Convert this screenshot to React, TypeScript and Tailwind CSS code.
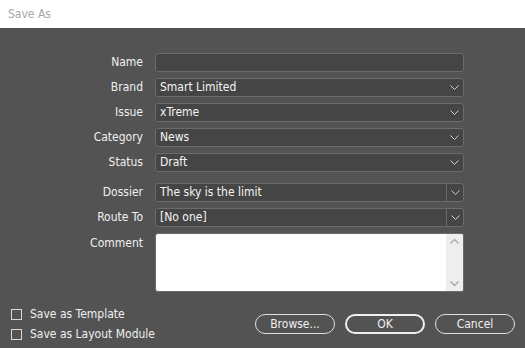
import React from 'react';

const font = { fontFamily: '"DejaVu Sans Condensed", "DejaVu Sans", "Liberation Sans", sans-serif' };

const Chevron = () => (
  <svg width="9" height="5" viewBox="0 0 9 5" className="shrink-0">
    <path d="M0.5 0.5 L4.5 4.5 L8.5 0.5" fill="none" stroke="#d0d0d0" strokeWidth="1" />
  </svg>
);

const Label: React.FC<{ text: string; top?: boolean }> = ({ text, top }) => (
  <div className={`w-[132px] shrink-0 text-right text-[12px] text-[#f0f0f0] ${top ? 'pt-[3px] leading-[14px]' : 'leading-[19px]'}`}>{text}</div>
);

const Select: React.FC<{ label: string; value: string; split?: boolean }> = ({ label, value, split }) => (
  <div className="flex items-center gap-3 h-[19px]">
    <Label text={label} />
    <div className="flex w-[309px] h-[19px] items-center rounded-[3px] border border-[#6b6b6b] bg-[#454545]">
      <div className="flex-1 pl-[4px] text-[12px] leading-[17px] text-[#f4f4f4] truncate">{value}</div>
      {split ? (
        <div className="flex h-full w-[17px] items-center justify-center border-l border-[#6b6b6b]">
          <Chevron />
        </div>
      ) : (
        <div className="flex w-[17px] items-center justify-center pr-[1px]">
          <Chevron />
        </div>
      )}
    </div>
  </div>
);

const Checkbox: React.FC<{ label: string }> = ({ label }) => (
  <div className="flex items-center h-[20px] gap-[8px]">
    <div className="w-[11px] h-[11px] border border-[#d8d8d8] bg-[#535353]" />
    <span className="text-[12px] text-[#f0f0f0]">{label}</span>
  </div>
);

const Btn: React.FC<{ label: string; primary?: boolean }> = ({ label, primary }) => (
  <button
    className={`w-[80px] h-[20px] rounded-full text-[12px] leading-none text-[#f0f0f0] bg-[#535353] ${primary ? 'border-2 border-[#f0f0f0]' : 'border border-[#e0e0e0]'}`}
  >
    {label}
  </button>
);

export default function App() {
  return (
    <div className="w-[525px] h-[348px] flex flex-col bg-[#535353] overflow-hidden" style={font}>
      <div className="h-[28px] bg-white flex items-center pl-[8px] text-[12px] text-[#a8a8a8]">
        Save As
      </div>
      <div className="flex flex-col pl-[11px] pt-[25px]">
        <div className="flex flex-col gap-[6px]">
          <div className="flex items-center gap-3 h-[19px]">
            <Label text="Name" />
            <div className="w-[309px] h-[19px] rounded-[3px] border border-[#6b6b6b] bg-[#454545]" />
          </div>
          <Select label="Brand" value="Smart Limited" />
          <Select label="Issue" value="xTreme" />
          <Select label="Category" value="News" />
          <Select label="Status" value="Draft" />
        </div>
        <div className="flex flex-col gap-[6px] mt-[11px]">
          <Select label="Dossier" value="The sky is the limit" split />
          <Select label="Route To" value="[No one]" split />
          <div className="flex items-start gap-3">
            <Label text="Comment" top />
            <div className="flex w-[309px] h-[59px] rounded-[3px] border border-[#6b6b6b] bg-white overflow-hidden">
              <div className="flex-1" />
              <div className="w-[17px] bg-[#eeeeee] flex flex-col items-center justify-between py-[5px]">
                <svg width="9" height="5" viewBox="0 0 9 5">
                  <path d="M0.5 4.5 L4.5 0.5 L8.5 4.5" fill="none" stroke="#a8a8a8" strokeWidth="1.4" />
                </svg>
                <svg width="9" height="5" viewBox="0 0 9 5">
                  <path d="M0.5 0.5 L4.5 4.5 L8.5 0.5" fill="none" stroke="#a8a8a8" strokeWidth="1.4" />
                </svg>
              </div>
            </div>
          </div>
        </div>
      </div>
      <div className="flex items-center justify-between mt-[12px] pl-[11px] pr-[10px]">
        <div className="flex flex-col">
          <Checkbox label="Save as Template" />
          <Checkbox label="Save as Layout Module" />
        </div>
        <div className="flex gap-[10px]">
          <Btn label="Browse..." />
          <Btn label="OK" primary />
          <Btn label="Cancel" />
        </div>
      </div>
    </div>
  );
}
